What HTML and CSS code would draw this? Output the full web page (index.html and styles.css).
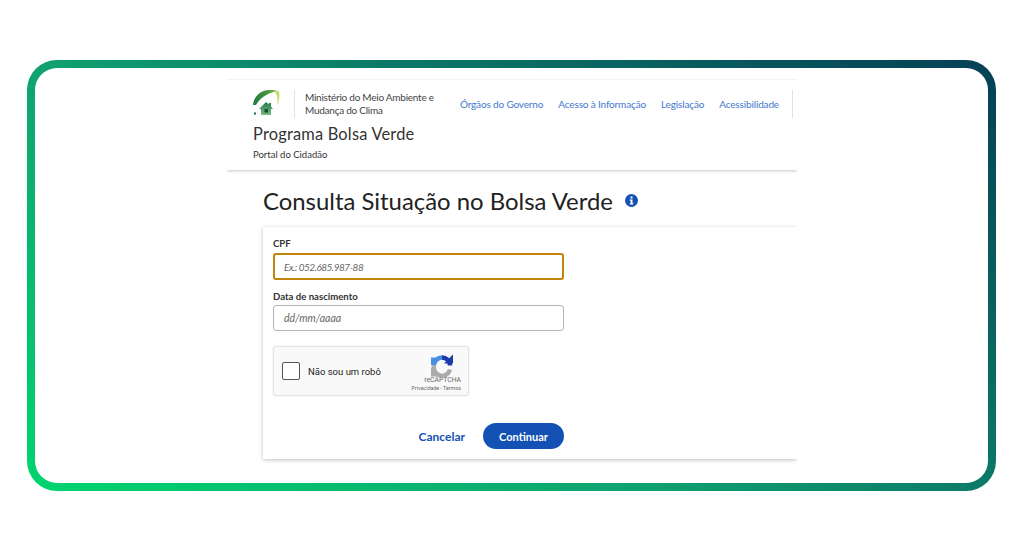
FILE: index.html
```html
<!DOCTYPE html>
<html lang="pt-BR">
<head>
  <meta charset="UTF-8">
  <meta name="viewport" content="width=device-width, initial-scale=1.0">
  <title>Consulta Situação no Bolsa Verde</title>
  <link rel="stylesheet" href="styles.css">
</head>
<body>
  <div class="frame">
    <div class="frame-inner">
      <div class="page">
        <header class="site-header">
          <div class="header-top">
            <svg class="logo" width="27" height="28" viewBox="0 0 27 28">
              <defs>
                <linearGradient id="arcFill" x1="0" y1="0" x2="1" y2="0">
                  <stop offset="0" stop-color="#1f7a3e"/>
                  <stop offset="0.6" stop-color="#4b9a3f"/>
                  <stop offset="1" stop-color="#a9c94a"/>
                </linearGradient>
                <linearGradient id="houseFill" x1="0" y1="0" x2="0" y2="1">
                  <stop offset="0" stop-color="#1f7a45"/>
                  <stop offset="1" stop-color="#7dbb8c"/>
                </linearGradient>
              </defs>
              <path d="M0 15 C1 6 8 0 16 0 C20 0 24 0.500 26 1 C18 2 9 5 3 15 Z" fill="url(#arcFill)"/>
              <path d="M26 1 C27 7 26 12 24 15.500 C25 10 25 6 22 2.500 Z" fill="#c3d86a"/>
              <path d="M6 19 L13 12 L16 14.500 L16 13 L18 13 L18 16.500 L20 19 L18 19 L18 25 L8 25 L8 19 Z" fill="url(#houseFill)"/>
              <rect x="11.500" y="19" width="3.500" height="3.500" fill="#14532d"/>
              <rect x="1" y="22.500" width="2" height="2" fill="#1c6b3a"/>
            </svg>
            <div class="ministry">Ministério do Meio Ambiente e<br>Mudança do Clima</div>
            <nav class="top-nav">
              <a href="#">Órgãos do Governo</a>
              <a href="#">Acesso à Informação</a>
              <a href="#">Legislação</a>
              <a href="#">Acessibilidade</a>
            </nav>
          </div>
          <div class="program-name">Programa Bolsa Verde</div>
          <div class="portal-name">Portal do Cidadão</div>
        </header>

        <main class="content">
          <div class="title-row">
            <h1>Consulta Situação no Bolsa Verde</h1>
            <svg class="info-icon" width="13" height="13" viewBox="0 0 13 13">
              <circle cx="6.500" cy="6.500" r="6.500" fill="#1351b4"/>
              <rect x="5.500" y="2.500" width="2" height="2" fill="#fff"/>
              <path d="M4.800 5.500 H7.500 V9.200 H8.300 V10.500 H4.800 V9.200 H5.600 V6.700 H4.800 Z" fill="#fff"/>
            </svg>
          </div>

          <form class="card">
            <label class="field-label" for="cpf">CPF</label>
            <div class="fake-input focused" id="cpf">Ex.: 052.685.987-88</div>
            <label class="field-label second" for="nasc">Data de nascimento</label>
            <div class="fake-input" id="nasc">dd/mm/aaaa</div>

            <div class="captcha">
              <span class="captcha-box"></span>
              <span class="captcha-text">Não sou um robô</span>
              <div class="captcha-brand">
                <svg class="captcha-icon" width="22" height="23" viewBox="0 0 22 22">
                  <path d="M11 3 A8 8 0 0 0 3 11" fill="none" stroke="#4a90e2" stroke-width="4.500"/>
                  <path d="M0 3 L7.500 3 L0 11 Z" fill="#4a90e2"/>
                  <path d="M11 3 A8 8 0 0 1 19 11" fill="none" stroke="#1c3aa9" stroke-width="4.500"/>
                  <path d="M22 0 L22 9 L13 9 Z" fill="#1c3aa9"/>
                  <path d="M3 11 A8 8 0 0 0 19 15" fill="none" stroke="#ababab" stroke-width="4.500"/>
                  <path d="M0 22 L0 13 L9 22 Z" fill="#ababab"/>
                </svg>
                <span class="captcha-name">reCAPTCHA</span>
                <span class="captcha-links">Privacidade - Termos</span>
              </div>
            </div>

            <div class="actions">
              <a class="btn-cancel" href="#">Cancelar</a>
              <button class="btn-primary" type="button">Continuar</button>
            </div>
          </form>
        </main>
      </div>
    </div>
  </div>
</body>
</html>
```

FILE: styles.css
```css
* {
  margin: 0;
  padding: 0;
  box-sizing: border-box;
}

body {
  font-family: "Lato", "Open Sans", sans-serif;
  background-color: #fff;
  color: #333;
  height: 536px;
  overflow: hidden;
}

.frame {
  width: 969px;
  height: 431px;
  margin: 60px 0 0 27px;
  padding: 8px;
  border-radius: 30px;
  background: linear-gradient(35deg, #00d56f 0%, #0fa270 39%, #0b7a68 61%, #063f55 100%);
}

.frame-inner {
  height: 100%;
  background-color: #fff;
  border-radius: 22px;
  padding: 11px 191px 0 192px;
  overflow: hidden;
}

.page {
  width: 570px;
  overflow: hidden;
  padding-bottom: 10px;
}

.site-header {
  height: 91px;
  padding: 10px 4px 0 26px;
  border-top: 1px solid #f3f3f3;
  box-shadow: 0 1px 3px rgba(0, 0, 0, 0.22);
}

.header-top {
  display: flex;
  align-items: center;
  height: 28px;
}

.ministry {
  margin-left: 14px;
  padding-left: 10px;
  border-left: 1px solid #e2e2e2;
  font-size: 10px;
  letter-spacing: -0.25px;
  line-height: 13px;
  height: 28px;
  padding-top: 1px;
  color: #444;
  white-space: nowrap;
}

.top-nav {
  display: flex;
  gap: 15px;
  margin-left: auto;
  padding-right: 13px;
  height: 28px;
  align-items: center;
  border-right: 1px solid #e2e2e2;
}

.top-nav a {
  font-size: 10px;
  letter-spacing: -0.15px;
  color: #3f78d0;
  text-decoration: none;
  white-space: nowrap;
}

.program-name {
  margin-top: 6px;
  font-size: 16.400px;
  line-height: 20px;
  color: #333;
  letter-spacing: 0.2px;
}

.portal-name {
  margin-top: 5px;
  font-size: 9.500px;
  line-height: 12px;
  color: #333;
}

.content {
  padding: 16px 0 0 36px;
}

.title-row {
  display: flex;
  align-items: center;
  gap: 12px;
  height: 28px;
}

h1 {
  font-size: 23.900px;
  font-weight: 400;
  color: #222;
  white-space: nowrap;
}

.card {
  margin-top: 13px;
  height: 232px;
  padding: 12px 10px 0;
  background-color: #fff;
  box-shadow: 0 1px 4px rgba(0, 0, 0, 0.25);
}

.field-label {
  display: block;
  font-size: 9.600px;
  font-weight: 700;
  line-height: 10px;
  color: #333;
}

.field-label.second {
  margin-top: 12px;
}

.fake-input {
  width: 291px;
  height: 26px;
  margin-top: 3px;
  padding-left: 10px;
  border: 1px solid #b5b5b5;
  border-radius: 3px;
  font-size: 10.500px;
  font-style: italic;
  line-height: 25px;
  color: #666;
}

.fake-input.focused {
  height: 27px;
  margin-top: 4px;
  border: 2px solid #c2850c;
  padding-left: 9px;
  font-size: 10px;
  letter-spacing: -0.5px;
}

.captcha {
  display: flex;
  align-items: center;
  width: 196px;
  height: 50px;
  margin-top: 15px;
  padding-left: 8px;
  background-color: #f9f9f9;
  border: 1px solid #e3e3e3;
  border-radius: 3px;
  box-shadow: 0 0 2px rgba(0, 0, 0, 0.1);
}

.captcha-box {
  width: 18px;
  height: 18px;
  background-color: #fff;
  border: 1.500px solid #555;
  border-radius: 2px;
}

.captcha-text {
  margin-left: 8px;
  font-family: "Roboto", sans-serif;
  font-size: 9.500px;
  color: #222;
}

.captcha-brand {
  display: flex;
  flex-direction: column;
  align-items: flex-end;
  margin-left: auto;
  margin-right: 7px;
  margin-top: 4px;
  font-family: "Roboto", sans-serif;
  color: #666;
}

.captcha-icon {
  margin-right: 8px;
}

.captcha-name {
  margin-top: -1px;
  font-size: 6.800px;
  line-height: 8px;
}

.captcha-links {
  font-size: 5.300px;
  line-height: 8px;
  white-space: nowrap;
}

.actions {
  display: flex;
  justify-content: flex-end;
  align-items: center;
  gap: 18px;
  width: 291px;
  margin-top: 27px;
}

.btn-cancel {
  font-size: 12px;
  font-weight: 700;
  color: #1351b4;
  text-decoration: none;
}

.btn-primary {
  width: 81px;
  height: 26px;
  background-color: #1351b4;
  color: #fff;
  border: none;
  border-radius: 13px;
  font-family: inherit;
  font-size: 11px;
  font-weight: 700;
}
```
